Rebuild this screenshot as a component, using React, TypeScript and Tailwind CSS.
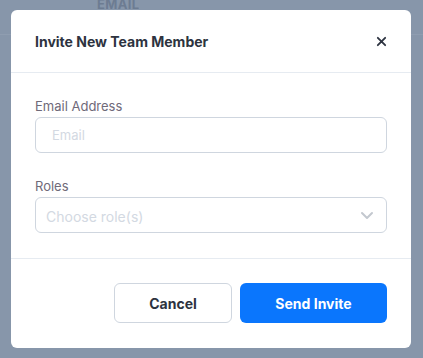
import React from 'react';

function CloseIcon() {
  return (
    <svg width="11" height="11" viewBox="0 0 12 12" fill="none" stroke="#2d3340" strokeWidth="2" strokeLinecap="round">
      <path d="M2 2l8 8M10 2l-8 8" />
    </svg>
  );
}

function ChevronIcon() {
  return (
    <svg width="14" height="9" viewBox="0 0 14 9" fill="none" stroke="#c3c8cf" strokeWidth="2" strokeLinecap="round" strokeLinejoin="round">
      <path d="M2 2l5 5 5-5" />
    </svg>
  );
}

export default function App() {
  return (
    <div
      className="relative w-[423px] h-[358px] overflow-hidden bg-[#8796aa]"
      style={{ fontFamily: 'Inter, "Noto Sans", sans-serif' }}
    >
      {/* dimmed page behind */}
      <div className="h-[40px] border-b border-[#8f9db0] pl-[97px]">
        <span className="block -mt-[5px] text-[13px] font-bold tracking-wide text-[#6d7c92]">EMAIL</span>
      </div>

      {/* modal */}
      <div className="absolute left-[11px] top-[10px] w-[400px] h-[338px] bg-white rounded-md flex flex-col">
        <div className="h-[63px] flex items-center justify-between px-6 border-b border-[#e6ebf1]">
          <h2 className="text-[14px] font-bold text-[#2d3340]">Invite New Team Member</h2>
          <button className="w-4 h-4 flex items-center justify-center mr-[-2px]">
            <CloseIcon />
          </button>
        </div>

        <div className="px-6 pt-[23px] pb-[25px] border-b border-[#e6ebf1]">
          <label className="block h-5 leading-5 text-[13px] text-[#6f6a79] mb-[1px]">Email Address</label>
          <div className="h-9 rounded-md border border-[#cfd6df] flex items-center pl-4 pt-[2px]">
            <span className="text-[13px] text-[#d3d9e2]">Email</span>
          </div>

          <label className="block h-5 leading-5 text-[13px] text-[#6f6a79] mt-[23px] mb-[1px]">Roles</label>
          <div className="h-9 rounded-md border border-[#cfd6df] flex items-center justify-between pl-[10px] pr-[12px]">
            <span className="text-[14px] text-[#d3d9e2] pt-[2px]">Choose role(s)</span>
            <ChevronIcon />
          </div>
        </div>

        <div className="flex justify-end gap-2 px-6 pt-6">
          <button className="w-[118px] h-10 rounded-md border border-[#cfd6df] bg-white text-[14px] font-bold text-[#2d3340]">
            Cancel
          </button>
          <button className="w-[147px] h-10 rounded-md bg-[#0a76fd] text-[14px] font-bold text-white">
            Send Invite
          </button>
        </div>
      </div>
    </div>
  );
}
